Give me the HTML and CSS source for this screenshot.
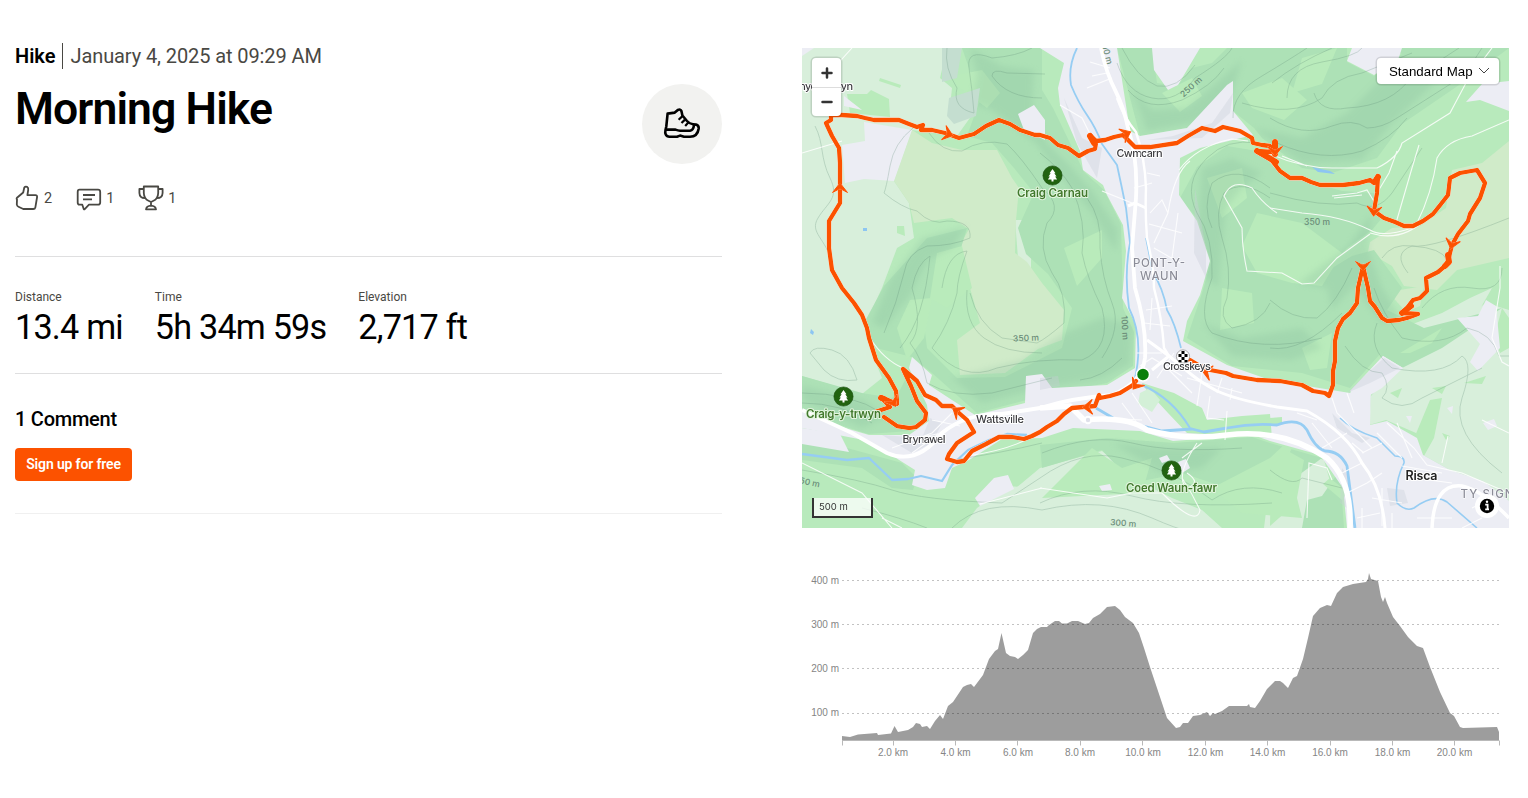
FILE: index.html
```html
<!DOCTYPE html>
<html lang="en">
<head>
    <meta charset="UTF-8">
    <meta name="viewport" content="width=device-width, initial-scale=1.0">
    <title>Morning Hike</title>
    <link rel="stylesheet" href="styles.css">
</head>
<body>
    <main class="activity">
        <section class="details">
            <div class="summary">
                <div class="heading">
                    <div class="meta">
                        <span class="sport">Hike</span>
                        <time class="date">January 4, 2025 at 09:29 AM</time>
                    </div>
                    <h1 class="title">Morning Hike</h1>
                </div>
                <div class="sport-icon">
                    <svg width="40" height="40" viewBox="0 0 40 40" fill="none" stroke="#000" stroke-width="2.6" stroke-linejoin="round">
                        <path d="M5.6 9.6 L12.8 8.6 L15.8 6 Q18.5 4.8 19.4 7 L20.400 11.500 L25 17 Q27.500 19.800 31 20.200 L34 20.600 Q37 21.500 36.700 24.500 C36 29.500 33 32.700 28 32.700 H22 L18 31.600 L15 32.700 H7.500 C3.500 32.700 2.800 29 3.500 26 L4.300 22.500 Z"/>
                        <path d="M4 25.600 H13.500 Q16 26.600 18 26.700 H28 Q31.500 26.200 32 21"/>
                        <path stroke-width="2.200" d="M16.600 15.700 L20.200 12.400 M19.500 19 L23 15.600 M23.200 21.900 L26.300 18.600"/>
                    </svg>
                </div>
            </div>

            <div class="reactions">
                <div class="reaction">
                    <svg width="24" height="26" viewBox="0 0 24 26">
                        <path d="M2 14.5 Q1.2 14 2 12.8 L8.2 7.5 L9.3 2.5 Q10.2 1.2 12 1.8 Q13.7 2.8 13.2 5 L12.4 10.2 H20.4 Q22.3 10.3 22.1 12 L20.4 22.2 Q20 24 18.2 24 H8.2 L3.5 21.7 Q2 21 1.8 19.5 Z"/>
                    </svg>
                    <span>2</span>
                </div>
                <div class="reaction">
                    <svg width="26" height="26" viewBox="0 0 26 26">
                        <path d="M3.5 4.7 H22 Q24.2 4.7 24.2 7 V17.5 Q24.2 19.7 22 19.7 H13 L8.5 24.3 H7.8 L6.3 19.7 H3.5 Q1.7 19.7 1.7 17.5 V7 Q1.7 4.7 3.5 4.7 Z M7 10 H19 M7 14.3 H16"/>
                    </svg>
                    <span>1</span>
                </div>
                <div class="reaction">
                    <svg width="26" height="26" viewBox="0 0 26 26">
                        <path d="M5.8 1.5 H20.2 V8 Q20 13.7 15.5 15.8 L13 17 L10.5 15.8 Q6 13.7 5.8 8 Z M5.8 4 H1.4 V8 Q1.6 13.1 7 13.2 M20.2 4 H24.6 V8 Q24.4 13.1 19 13.2 M13 17 V20.5 M8 24.3 Q8.6 21 13 20.7 Q17.4 21 18 24.3 Z"/>
                    </svg>
                    <span>1</span>
                </div>
            </div>

            <div class="stats">
                <div class="stat">
                    <div class="stat-label">Distance</div>
                    <div class="stat-value">13.4 mi</div>
                </div>
                <div class="stat">
                    <div class="stat-label">Time</div>
                    <div class="stat-value">5h 34m 59s</div>
                </div>
                <div class="stat">
                    <div class="stat-label">Elevation</div>
                    <div class="stat-value">2,717 ft</div>
                </div>
            </div>

            <div class="comments">
                <h2 class="comments-title">1 Comment</h2>
                <button class="signup-btn">Sign up for free</button>
            </div>
        </section>

        <section class="visuals">
            <div class="map">
                <svg class="map-canvas" width="707" height="480" viewBox="0 0 707 480">
                    <defs>
                        <filter id="soft" x="-10%" y="-10%" width="120%" height="120%"><feGaussianBlur stdDeviation="3"/></filter>
                        <g id="park">
                            <circle r="9.6" fill="#216310" stroke="#174b0b" stroke-width=".6"/>
                            <path d="M0 -6.5 L3 -2.2 H1.8 L4 1 H2.6 L4.6 4 H1 V6 H-1 V4 H-4.6 L-2.6 1 H-4 L-1.8 -2.2 H-3 Z" fill="#fff"/>
                        </g>
                        <path id="arrow" d="M0 -5 L7.5 4.5 L0 .5 L-7.5 4.5 Z"/>
                    </defs>

                    <rect width="707" height="480" fill="#b8eabc"/>

                    <!-- open fields -->
                    <g fill="#d8efdb">
                        <path d="M0 0 H145 L138 30 150 40 147 68 175 60 155 88 110 82 92 133 107 155 112 190 95 200 80 240 64 275 68 300 80 330 60 346 0 328 Z"/>
                        <path d="M213 172 H229 V240 L216 210 Z"/>
                        <path d="M601 310 L640 290 662 270 684 255 707 262 707 456 681 433 648 422 621 407 614 385 584 372 567 377 569 348 Z"/>
                        <path d="M600 280 L640 265 668 250 690 240 670 275 630 300 606 305 Z"/>
                        <path d="M238 420 L300 403 336 433 370 450 400 462 420 480 H235 L190 460 Z"/>
                        <path d="M466 412 L500 405 522 412 530 440 512 456 502 480 462 480 468 432 Z"/>
                        <path d="M175 460 L205 438 238 440 260 470 250 480 160 480 Z"/>
                    </g>
                    <g fill="#d0ebc9">
                        <path d="M110 82 L130 95 160 102 195 102 210 130 217 140 214 172 213 205 225 214 240 235 262 262 260 292 236 301 203 325 158 327 155 292 178 275 168 240 155 202 167 181 150 170 112 175 107 155 92 133 Z"/>
                        <path d="M707 93 L680 115 650 122 644 160 618 178 590 180 568 194 566 204 590 218 602 238 635 242 655 222 707 210 Z"/>
                        <path d="M586 244 L622 238 618 258 604 264 Z"/>
                    </g>

                    <!-- woodland -->
                    <g fill="#ade1b6">
                        <path d="M160 0 H240 V42 L251 60 268 95 282 124 302 142 319 176 321 260 332 284 331 318 305 335 240 348 175 365 130 325 110 309 74 300 62 275 82 238 125 190 165 180 150 230 120 260 125 300 155 330 203 329 260 300 270 260 246 226 224 206 216 180 232 145 212 120 190 95 165 88 178 52 Z"/>
                        <path d="M0 328 L60 345 90 350 98 342 104 330 115 350 124 371 108 383 66 386 35 376 0 363 Z"/>
                        <path d="M315 0 H350 L355 35 375 38 390 20 410 15 425 0 H545 L545 14 572 28 600 6 590 0 707 0 660 35 600 76 575 110 530 125 500 120 460 90 452 80 431 63 431 33 385 80 338 88 Z"/>
                        <path d="M378 150 L395 119 425 98 455 103 478 125 540 143 572 145 580 170 570 182 545 200 520 228 500 238 550 208 572 202 600 240 585 262 622 280 700 260 640 300 590 325 578 306 548 340 500 325 430 318 385 290 400 245 409 214 396 172 Z"/>
                        <path d="M372 395 L450 389 468 395 520 410 490 432 462 430 440 445 380 425 330 435 300 402 240 420 238 397 305 390 Z"/>
                        <path d="M0 388 L45 400 100 415 115 430 111 442 90 440 60 420 0 412 Z"/>
                        <path d="M500 480 L505 452 520 448 538 422 542 480 Z"/>
                    </g>
                    <g fill="#b9ebbb">
                        <path d="M45 46 L65 46 69 42 87 51 88 69 48 65 Z M78 30 L99 37 98 40 77 33 Z M95 178 L102 178 103 188 95 185 Z"/>
                        <path d="M150 28 L180 22 198 45 185 60 155 38 Z M135 205 L160 198 170 240 145 260 128 250 Z M108 252 L130 250 122 290 105 312 95 280 Z"/>
                        <path d="M440 45 L480 30 505 52 482 72 450 60 Z M500 10 L535 0 520 36 490 45 Z"/>
                        <path d="M455 165 L500 175 540 205 520 238 490 235 455 225 440 198 Z M405 130 L440 120 445 150 420 170 Z"/>
                        <path d="M360 45 L390 30 400 48 378 64 Z M260 12 L280 10 284 38 264 40 Z M296 70 L308 75 312 82 300 88 291 80 Z"/>
                        <path d="M262 200 L300 182 300 210 275 238 Z M420 240 L450 245 452 275 418 282 Z M500 300 L530 285 525 320 508 322 Z"/>
                        <path d="M240 450 L290 400 320 420 350 410 340 445 Z M410 440 L468 410 500 380 485 410 500 470 440 465 Z"/>
                        <path d="M469 420 L484 402 502 412 494 455 468 478 Z"/>
                        <path d="M628 352 L640 350 632 390 618 415 613 388 Z M598 305 L640 280 630 295 608 305 Z M700 260 L707 270 707 300 698 305 692 290 Z"/>
                        <path d="M365 118 L376 120 366 150 355 152 Z M376 205 L389 194 395 200 395 222 385 215 374 210 Z M350 112 L360 112 361 118 351 117 Z"/>
                        <path d="M640 385 L648 388 644 392 Z M588 345 L600 340 596 350 Z M662 335 L684 328 680 336 Z M630 340 L644 338 640 346 Z"/>
                    </g>

                    <!-- hill shading -->
                    <g class="shade" filter="url(#soft)">
                        <path d="M168 0 L200 18 232 22 230 60 245 95 268 118 292 145 316 182 314 204 290 165 258 128 235 96 190 62 170 55 175 25 Z"/>
                        <path d="M120 190 L165 178 150 200 126 212 108 248 82 280 70 275 88 232 Z"/>
                        <path d="M150 330 L220 312 262 285 300 270 330 276 328 316 300 330 240 340 180 355 Z"/>
                        <path d="M330 40 L350 62 385 60 420 30 440 12 425 60 390 75 345 83 Z"/>
                        <path d="M452 80 L500 90 545 65 580 30 640 28 590 75 560 112 500 115 Z"/>
                        <path d="M400 120 L430 110 460 125 440 140 424 160 416 240 392 220 Z"/>
                        <path d="M496 235 L545 200 570 165 566 200 580 240 598 268 580 275 552 238 530 262 525 240 Z"/>
                        <path d="M0 338 L60 352 85 368 60 380 0 352 Z"/>
                        <path d="M400 275 L440 290 500 280 520 300 490 312 430 308 Z"/>
                        <path d="M310 395 L360 400 420 400 400 420 360 425 Z"/>
                    </g>

                    <!-- built-up areas -->
                    <path class="town" d="M238 0 H315 L328 83 338 88 385 80 425 37 431 33 431 63 451 87 398 100 378 110 377 147 395 173 408 213 398 247 385 273 381 293 425 317 468 332 548 345 581 308 601 320 569 342 568 377 585 373 615 390 621 407 648 422 681 433 707 453 V480 H545 L541 440 518 407 468 393 451 387 371 393 338 383 271 380 240 390 200 391 167 412 150 420 143 440 125 442 110 437 113 422 67 393 0 380 V363 L33 377 67 387 107 387 127 373 125 357 107 320 110 309 130 327 127 337 173 367 223 355 224 328 240 326 250 340 305 337 333 320 334 277 320 250 321 240 324 203 321 177 305 147 301 137 281 122 278 103 258 57 256 40 262 15 Z"/>
                    <path class="town" d="M62 74 L110 82 92 133 62 131 43 135 40 97 63 93 Z M0 0 H12 L0 8 Z M42 48 L60 62 42 58 Z M216 66 L232 57 243 72 243 92 222 82 Z"/>
                    <path d="M140 0 H160 L155 30 140 34 Z M147 50 L178 40 174 68 152 76 145 68 Z" fill="#c4ded0"/>
                    <path class="town" d="M350 0 L398 0 376 37 366 42 352 22 Z M545 13 L550 0 600 0 596 12 572 27 Z M664 54 L680 36 707 33 V63 L678 52 Z"/>
                    <path class="town" d="M655 270 L676 268 684 252 694 258 698 300 676 323 668 314 678 296 Z M173 450 L192 430 206 427 212 441 178 458 Z M0 380 L38 386 47 404 0 396 Z M681 375 L692 371 695 378 686 382 Z M372 245 L398 243 386 270 375 262 Z M604 368 L610 368 608 375 Z M645 360 L651 358 650 366 Z M357 410 L365 407 368 412 360 415 Z M376 414 L384 411 388 420 380 425 Z M297 438 L308 436 310 442 300 443 Z"/>
                    <path class="town" d="M548 343 L581 308 601 320 580 340 560 352 Z"/>
                    <path d="M340 335 L372 345 400 360 405 372 440 368 468 366 470 390 385 385 366 365 343 340 Z M521 436 L528 430 545 444 540 452 Z M468 370 L480 369 480 376 468 377 Z" fill="#b9ebbb"/>
                    <path d="M338 345 L348 340 358 352 350 364 336 356 Z" fill="#d3f0d7"/>
                    <g fill="#c9cdd8" opacity=".35">
                        <path d="M262 50 L280 90 300 100 295 130 275 95 Z M371 88 L410 75 431 45 428 65 400 90 345 92 Z M393 140 L404 200 404 230 392 205 Z M238 330 L256 328 258 338 238 342 Z"/>
                        <path d="M530 365 L550 385 568 390 560 395 535 380 Z M560 330 L582 310 598 320 568 335 545 345 Z M80 387 L120 390 128 370 140 375 130 395 110 405 Z M585 440 L602 442 606 455 588 458 Z M540 420 L548 430 545 460 538 455 Z"/>
                    </g>

                    <!-- contour lines -->
                    <g class="contour">
                        <path d="M13 78 C22 95 18 110 28 130 S25 155 16 170 S24 190 30 215"/>
                        <path d="M111 80 Q92 95 88 118 T82 145 Q100 160 115 163 Q130 178 145 173 Q170 173 168 190 Q150 198 125 198 Q105 205 102 225 Q95 255 82 285"/>
                        <path d="M127 85 Q140 105 160 103 Q180 90 205 96 Q220 110 240 140 Q262 158 245 175 Q235 200 250 225 Q265 245 262 275 Q245 290 235 295 L200 290 Q175 275 168 245"/>
                        <path d="M145 0 Q142 20 155 40 Q150 60 172 65 Q170 40 167 20 T190 10 Q215 8 230 0 M240 50 Q205 50 190 28 Q190 20 205 25 L243 26"/>
                        <path d="M110 240 Q115 215 128 208 Q125 240 118 262 T98 300 M140 240 Q145 205 165 203 Q155 230 155 245 Q148 275 130 300 Q160 335 195 320 Q235 310 280 312 Q310 300 300 260 Q285 230 280 205 Q285 175 270 140 Q258 120 238 105"/>
                        <path d="M300 310 Q320 280 310 255 T298 200 Q300 170 285 150 M165 242 Q162 275 182 290 T240 305 M278 332 Q300 330 320 310"/>
                        <path d="M110 240 Q122 280 108 295 Q120 310 125 335 Q150 350 190 345 L250 330 M8 305 Q12 297 30 302 T55 332 Q35 335 22 322 Z"/>
                        <path d="M315 15 Q325 45 350 50 T393 30 Q425 10 430 0 M320 0 Q335 30 355 38 Q375 42 393 17 M326 42 Q345 65 380 52 Q410 38 422 20"/>
                        <path d="M431 70 Q430 45 460 28 Q490 10 505 0 M470 35 Q495 15 530 0 M468 70 Q500 90 530 78 Q550 70 565 80 Q580 80 595 70 L650 35 Q665 25 680 0"/>
                        <path d="M440 55 Q490 70 520 50 Q530 30 560 25 L610 5 M485 50 Q485 20 520 14 T560 0 M512 45 Q518 65 545 60 Q590 58 610 28 Q630 18 657 0"/>
                        <path d="M475 95 Q520 115 560 103 Q590 90 605 70 M455 95 Q425 90 405 110 Q380 135 395 165 Q412 190 410 230 Q395 270 410 285 Q460 305 520 290"/>
                        <path d="M468 150 Q440 130 422 145 Q412 165 420 190 Q430 220 425 250 Q415 270 430 280 Q460 275 468 255 M468 140 Q435 115 410 135 Q400 160 410 180 M468 145 Q520 160 555 155 Q575 165 590 145 L620 100"/>
                        <path d="M468 252 Q490 272 515 270 Q535 255 550 220 M468 300 Q500 305 540 265 M572 240 Q580 265 600 290 Q640 300 665 280 Q690 285 697 308 L707 308 M575 275 Q565 300 590 320 Q640 330 660 308 Q672 315 660 350 T700 425"/>
                        <path d="M543 298 Q560 325 580 325 Q590 340 580 350 Q600 365 620 350 L680 320 M606 225 Q590 205 610 198 Q640 200 645 212 M580 210 Q590 195 610 198 T707 170 M620 260 Q640 235 670 240 T700 220"/>
                        <path d="M0 355 Q40 355 70 375 M0 345 Q50 345 80 365 M0 422 Q60 432 90 442 T200 455 L238 430 Q280 400 320 410 Q370 420 410 452 Q440 432 480 445 M150 480 Q180 450 240 462 Q300 448 350 470 T400 480"/>
                        <path d="M240 405 Q290 385 330 395 T440 400 M238 455 Q280 435 330 448 T470 455 M150 412 Q200 405 240 395 M60 460 Q100 470 125 480 M468 422 Q490 440 500 430 L540 440"/>
                    </g>

                    <!-- water -->
                    <g class="river">
                        <path d="M275 0 Q266 18 269 37 Q276 54 285 67 T300 96 L315 117 Q320 140 324 160 L328 195 Q322 225 327 260 Q342 290 333 330" stroke-width="1.800"/>
                        <path d="M344 190 L351 225 Q361 240 365 262 Q373 275 379 300" stroke-width="1.700"/>
                        <path d="M0 406 L45 412 67 410 90 432 106 431 119 428 140 433 150 417 166 402 187 392 205 386 225 387" stroke-width="2.300"/>
                        <path d="M294 360 L311 370 360 383 390 381 402 384 425 380 Q450 375 475 377 Q497 369 505 382 Q513 400 523 403 Q538 403 545 418 L553 480" stroke-width="2.800"/>
                        <path d="M340 337 Q370 350 388 380" stroke-width="2"/>
                        <path d="M538 370 Q550 382 575 390 L593 408 Q603 408 602 415 Q592 435 595 455 Q604 464 612 460 Q632 445 645 454 L675 480" stroke-width="1.600"/>
                    </g>
                    <path d="M510 119 L528 123 533 126 516 124 Z M61 180 h4 v3 h-4 Z M9 281 l3 3 -1 3 -3 -2 Z" fill="#8dc6f2"/>

                    <!-- minor streets and tracks -->
                    <g class="street">
                        <path d="M30 22 L50 0 M0 105 L40 93 M258 57 L280 70 295 100 M285 40 L310 30 M288 14 L308 20 M290 28 L305 25"/>
                        <path d="M377 122 Q395 98 430 91 L446 93 M366 165 Q372 125 388 113 M348 165 L360 152 366 165 352 195 M347 176 L380 185 M352 200 L378 215 M376 165 L370 210 M332 140 L350 135 M345 125 L358 128 M330 155 L300 143"/>
                        <path d="M344 262 L370 258 M342 275 L368 278 M350 250 L348 282 M335 305 L360 305 M338 318 L350 310 380 328 M360 315 L390 345 M372 305 L355 330 M385 330 L440 345 M400 325 L395 358 M420 330 L415 345 M430 340 L428 352 M330 345 L350 375 M320 355 L335 375 M300 370 L340 372"/>
                        <path d="M90 400 L130 385 150 365 M110 405 L145 380 M100 393 L140 385 M130 372 L158 378 M0 415 L60 445 90 480 M68 290 Q82 312 101 320 M165 408 Q210 402 237 385 M178 456 L240 440 M80 470 L100 480"/>
                        <path d="M468 106 Q500 120 530 120 L575 120 Q596 110 600 95 L648 65 665 33 690 0 M480 108 L505 118 M468 160 L500 165 Q540 168 568 182 Q580 190 610 180 M595 103 L587 125 575 145 M617 97 L610 120 594 175"/>
                        <path d="M530 148 L555 145 565 142 573 155 M532 150 L560 147 M568 186 L535 210 512 235 500 236 480 225 445 223 Q440 200 440 180 L422 148 Q430 130 450 140 Q460 155 475 165"/>
                        <path d="M615 175 Q630 145 635 110 Q645 92 670 88 L707 72 M698 240 L690 290 700 314 707 318 M698 218 V240 M568 185 Q600 195 625 170"/>
                        <path d="M408 348 L405 370 422 372 M425 363 L423 392 M400 395 L380 410 M385 425 Q400 435 385 440 Q372 430 395 395 M238 440 L305 450 330 445 360 445 Q395 480 398 462 Q390 445 380 430 M505 470 L507 415 525 420 530 432"/>
                        <path d="M530 350 L535 365 570 400 M545 345 L552 365 M585 375 L612 400 625 417 660 425 707 445 M595 375 L610 410 M575 385 L600 410 M640 415 L646 388 M600 418 L640 425 M612 430 L650 435 M680 372 L707 385"/>
                        <path d="M540 425 L560 415 M545 445 L565 435 580 425 M555 470 L578 465 M580 440 V478 M590 465 V480 M560 460 V480 M570 450 L600 455 M520 400 L545 385 M510 375 L530 400 M495 365 L515 372 M615 470 H650 M670 460 L690 450 M560 405 L580 395 M550 395 L562 405 M660 480 L680 470"/>
                    </g>

                    <!-- main roads -->
                    <g class="road">
                        <path d="M299 0 Q304 25 314 44 Q322 60 326 80 Q336 110 334 150 L330 200 333 240 Q345 280 343 310 Q340 335 310 347 Q270 350 238 360 L200 366 Q165 365 140 385 Q115 418 85 405 L50 385 0 362" stroke-width="3.800"/>
                        <path d="M315 50 Q322 70 334 84 Q343 110 344 140 Q343 165 345 190 Q352 220 352 240 Q360 270 362 300 L367 308" stroke-width="2.400"/>
                        <path d="M326 158 L333 155 344 160 M345 292 L367 308 M350 322 L367 308 390 327 Q400 335 415 343 Q435 352 475 359 L505 363 Q545 385 560 415 Q580 440 583 480" stroke-width="3"/>
                        <path d="M238 360 L268 358 282 372 Q325 368 345 382 Q385 393 425 387 Q480 380 525 410 Q550 432 548 480" stroke-width="5.500"/>
                        <path d="M630 480 Q632 435 660 438 Q680 442 707 470" stroke-width="3.500"/>
                    </g>
                    <circle cx="286" cy="372" r="3.2" fill="#dfe0ea" stroke="#fff" stroke-width="2"/>

                    <!-- elevation labels -->
                    <g class="contour-label">
                        <text transform="translate(391 41) rotate(-42)" text-anchor="middle">250 m</text>
                        <text x="515" y="177" text-anchor="middle">350 m</text>
                        <text transform="translate(224 293) rotate(-2)" text-anchor="middle">350 m</text>
                        <text transform="translate(320 280) rotate(86)" text-anchor="middle">100 m</text>
                        <text transform="translate(321 478) rotate(4)" text-anchor="middle">300 m</text>
                        <text transform="translate(-8 434) rotate(12)">250 m</text>
                        <text transform="translate(302 5) rotate(75)" text-anchor="middle">100 m</text>
                    </g>

                    <!-- route -->
                    <g class="route">
                        <path d="M334 333 L331 337 318 345 308 348 298 350 297 347 293 358 281 359 270 360 262 366 255 373 245 379 238 384 230 388 222 391 210 389 197 389 184 396 170 403 162 413 155 414 145 411 147 406 155 395 172 384 165 372 157 365 150 358 140 358 134 352 123 347 115 333 101 321 109 338 115 353 124 365 123 372 114 379 108 380 95 378 82 369 M73 364 L88 359 79 349 95 356 95 353 94 343 87 330 74 312 67 290 65 280 60 267 52 255 40 240 30 222 27 200 27 173 38 155 38 115 37 100 30 88 24 75 29 72 29 67 40 67 55 68 63 70 72 72 97 72 107 76 115 79 121 77 119 82 130 82 143 85 157 90 172 86 184 78 197 72 208 76 218 82 233 87 238 87 248 90 256 97 266 100 277 108 286 103 293 101 294 95 288 87 294 93 303 92 312 89 321 87 326 92 333 99 348 99 361 97 375 95 386 88 400 80 413 83 421 79 438 83 450 90 451 95 460 97 468 98 470 104 455 103 468 110 478 123 488 130 500 130 509 134 518 137 541 137 557 135 568 132 572 135 576 128 575 145 572 163 582 170 593 174 602 178 611 178 621 173 631 166 639 156 646 147 648 130 658 125 675 122 683 135 678 150 668 166 666 173 656 186 650 197 646 213 643 218 636 224 624 230 625 243 618 250 611 252 605 260 600 265 616 266 605 270 597 272 585 273 580 270 573 259 568 253 566 240 561 218 556 240 555 255 548 265 541 271 536 280 533 293 533 313 531 323 531 337 527 348 523 345 511 343 500 337 478 333 455 332 431 328 424 325 408 322 398 318 388 312"/>
                        <path class="blobs" d="M455 103 L474 114 M473 94 V106 M288 88 L292 95 M646 207 L647 214 643 218 M574 132 L576 129 M79 350 L82 351 M600 265 L609 258"/>
                    </g>
                    <g class="arrows">
                        <use href="#arrow" transform="translate(38 140)"/>
                        <use href="#arrow" transform="translate(146 86) rotate(108)"/>
                        <use href="#arrow" transform="translate(324 86) rotate(65)"/>
                        <use href="#arrow" transform="translate(473 103) rotate(180)"/>
                        <use href="#arrow" transform="translate(572 163) rotate(185)"/>
                        <use href="#arrow" transform="translate(650 196) rotate(195)"/>
                        <use href="#arrow" transform="translate(561 218) rotate(180)"/>
                        <use href="#arrow" transform="translate(405 324) rotate(-75)"/>
                        <use href="#arrow" transform="translate(334 337) rotate(215)"/>
                        <use href="#arrow" transform="translate(286 359) rotate(-92)"/>
                        <use href="#arrow" transform="translate(155 363) rotate(-55)"/>
                        <use href="#arrow" transform="translate(91 354) rotate(150)"/>
                    </g>

                    <!-- start and finish -->
                    <circle cx="341" cy="326.5" r="6.5" fill="#0b7f0b" stroke="#fff" stroke-width="1.500"/>
                    <circle cx="381" cy="308.5" r="6.600" fill="#fff" stroke="#777" stroke-width=".6"/>
                    <path d="M379.5 303 h3 v3 h-3 Z M379.5 309 h3 v3 h-3 Z M376.5 306 h3 v3 h-3 Z M382.5 306 h3 v3 h-3 Z M376.5 312 h3 v2.2 h-3 Z M382.5 312 h3 v2.2 h-3 Z" fill="#000"/>

                    <!-- place names -->
                    <use href="#park" x="250.5" y="127.500"/>
                    <use href="#park" x="41.500" y="348.500"/>
                    <use href="#park" x="369.500" y="422.500"/>
                    <g class="park-label">
                        <text x="250.500" y="149" textLength="71">Craig Carnau</text>
                        <text x="41.500" y="370" textLength="75">Craig-y-trwyn</text>
                        <text x="369.500" y="444" textLength="91">Coed Waun-fawr</text>
                    </g>
                    <g class="village-label">
                        <text x="337.500" y="109" textLength="46">Cwmcarn</text>
                        <text x="385" y="322" textLength="48">Crosskeys</text>
                        <text x="198" y="375" textLength="48">Wattsville</text>
                        <text x="122" y="395" textLength="43">Brynawel</text>
                        <text x="16.500" y="42" textLength="69">Mynyddislwyn</text>
                    </g>
                    <text class="town-label" x="619.500" y="431.500" textLength="32">Risca</text>
                    <g class="district-label">
                        <text x="357" y="219" textLength="52">PONT-Y-</text>
                        <text x="357" y="232" textLength="38">WAUN</text>
                        <text x="685" y="450" textLength="53">TY SIGN</text>
                    </g>
                </svg>

                <div class="zoom-control">
                    <button class="zoom-btn" aria-label="Zoom in"><svg width="12" height="12"><path d="M1.500 6 H10.500 M6 1.500 V10.500"/></svg></button>
                    <button class="zoom-btn" aria-label="Zoom out"><svg width="12" height="12"><path d="M1.500 6 H10.500"/></svg></button>
                </div>
                <button class="map-style">
                    Standard Map
                    <svg width="12" height="8" viewBox="0 0 12 8"><path d="M1 1 L6 6 L11 1"/></svg>
                </button>
                <div class="scale">500 m</div>
                <button class="info-btn" aria-label="Attribution">
                    <svg width="24" height="24" viewBox="0 0 24 24">
                        <circle cx="12" cy="12" r="7.200"/>
                        <path d="M10.200 10.600 H12.600 V15.200 M10.200 15.400 H14" fill="none" stroke="#fff" stroke-width="1.800"/>
                        <circle cx="12" cy="7.800" r="1.200" fill="#fff"/>
                    </svg>
                </button>
            </div>

            <svg class="elevation-chart" width="707" height="210" viewBox="0 0 707 210">
                <path class="profile" d="M40 180 L40 176 48 177 56 174.500 75 173 76 175 89 173.500 92.500 166 96 172 106 170 111 167 114 163 118 164 120 167 125 166 128 169 133 161 138 155 141 159 146 146 151 142 161 127 165 125 169 124 172 127 181 115 187 99 193 91 196 89 199.500 73 204 93 208 96 213 97 216 99 221 95 226 90 231 73 235 69 239 67 245 67 247 65 253 61 257 61 260 63.500 265 63.500 270 61 276 61 283 64 287 63 291 58 298 54 305 47 313 46 318 50 323 57 331 63 337 73 342 88 348 107 355 128 358 137 365 158 374 168 378 167 381 163 386 163 391 156 398 155 405 152 408 156 411 153 413 154 420 151 427 146 445 146 447 144 448 147 453 148 458 141 465 129 473 121 478 121 481 123 486 128 491 118 495 116 501 99 506 78 511 56 518 48 525 45 529 46 535 33 541 27 551 24 564 22 566 19 567 13 569 19 576 21 579 37 581 42 583 37 585 43 591 57 598 66 606 77 615 86 621 88 628 107 638 132 648 153 652 156 658 167 661 168 695 167 697 172 697 180 Z"/>
                <path class="gridline" d="M40 20.500 H697 M40 64.500 H697 M40 108.500 H697 M40 153.500 H697"/>
                <path class="axis" d="M40 180.500 H697.500 M40.500 181 V185.500 M91.500 181 V185.500 M153.500 181 V185.500 M215.500 181 V185.500 M278.500 181 V185.500 M340.500 181 V185.500 M403.500 181 V185.500 M465.500 181 V185.500 M528.500 181 V185.500 M590.500 181 V185.500 M652.500 181 V185.500 M697.500 181 V185.500"/>
                <g class="y-labels">
                    <text x="37" y="24">400 m</text>
                    <text x="37" y="68">300 m</text>
                    <text x="37" y="112">200 m</text>
                    <text x="37" y="156">100 m</text>
                </g>
                <g class="x-labels">
                    <text x="91" y="196">2.0 km</text>
                    <text x="153.500" y="196">4.0 km</text>
                    <text x="216" y="196">6.0 km</text>
                    <text x="278" y="196">8.0 km</text>
                    <text x="341" y="196">10.0 km</text>
                    <text x="403.500" y="196">12.0 km</text>
                    <text x="465.500" y="196">14.0 km</text>
                    <text x="528" y="196">16.0 km</text>
                    <text x="590.500" y="196">18.0 km</text>
                    <text x="652.500" y="196">20.0 km</text>
                </g>
            </svg>
        </section>
    </main>
</body>
</html>
```
FILE: styles.css
```css
* {
    margin: 0;
    padding: 0;
    box-sizing: border-box;
}

body {
    font-family: Roboto, "Liberation Sans", sans-serif;
    background: #fff;
    color: #000;
}

button {
    border: none;
    font-family: inherit;
    cursor: pointer;
}

.activity {
    display: grid;
    grid-template-columns: 707px 707px;
    gap: 80px;
    padding: 0 15px;
}

.details {
    padding-top: 43px;
}

.summary {
    display: flex;
    justify-content: space-between;
    align-items: flex-start;
    height: 121px;
}

.meta {
    display: flex;
    align-items: center;
    height: 26px;
    font-size: 20px;
    white-space: nowrap;
}

.sport {
    height: 26px;
    line-height: 26px;
    padding-right: 7px;
    border-right: 1px solid #494843;
    font-weight: 600;
}

.date {
    padding-left: 7px;
    line-height: 26px;
    color: #494843;
    letter-spacing: -0.1px;
}

.title {
    margin-top: 13px;
    font-size: 44.5px;
    font-weight: 600;
    line-height: 54px;
    letter-spacing: -0.9px;
    white-space: nowrap;
}

.sport-icon {
    display: flex;
    align-items: center;
    justify-content: center;
    width: 80px;
    height: 80px;
    margin-top: 41px;
    border-radius: 50%;
    background: #f2f2f0;
}

.reactions {
    display: flex;
    gap: 24px;
    height: 92px;
    padding-top: 21px;
}

.reaction {
    display: flex;
    align-items: center;
    gap: 4px;
    height: 26px;
    font-size: 14.5px;
    color: #494843;
}

.reaction:first-child {
    gap: 5px;
}

.reaction svg {
    fill: none;
    stroke: #494843;
    stroke-width: 1.8;
    stroke-linejoin: round;
}

.stats {
    display: flex;
    gap: 32px;
    height: 118px;
    padding-top: 33px;
    border-top: 1px solid #dfdfe0;
    border-bottom: 1px solid #dfdfe0;
}

.stat-label {
    font-size: 12px;
    line-height: 14px;
    color: #494843;
}

.stat-value {
    margin-top: 3px;
    font-size: 34.2px;
    line-height: 40px;
    white-space: nowrap;
    letter-spacing: -0.8px;
}

.comments {
    height: 140px;
    padding-top: 32px;
    border-bottom: 1px solid #f0f0f0;
}

.comments-title {
    font-size: 20px;
    font-weight: 500;
    line-height: 26px;
    letter-spacing: -0.25px;
}

.signup-btn {
    display: block;
    width: 117px;
    height: 33px;
    margin-top: 16px;
    padding-bottom: 1px;
    border-radius: 4px;
    background: #fc5200;
    color: #fff;
    font-size: 14px;
    font-weight: 600;
    letter-spacing: -0.15px;
    white-space: nowrap;
}

.visuals {
    padding-top: 48px;
}

.map {
    position: relative;
    width: 707px;
    height: 480px;
    overflow: hidden;
}

.map-canvas {
    display: block;
}

.shade {
    fill: #7fb597;
    opacity: 0.22;
}

.town {
    fill: #ecedf4;
}

.contour {
    fill: none;
    stroke: #5e8a76;
    stroke-width: 0.7;
    opacity: 0.38;
}

.river {
    fill: none;
    stroke: #96cdf3;
    stroke-linejoin: round;
}

.street {
    fill: none;
    stroke: #fff;
    stroke-width: 1.1;
    opacity: 0.85;
}

.road {
    fill: none;
    stroke: #fff;
    stroke-linejoin: round;
}

.contour-label {
    font: 500 8.5px Inter, sans-serif;
    fill: #6a8c78;
}

.route {
    filter: drop-shadow(0 0 0.6px #fff) drop-shadow(0 0 0.6px #fff);
}

.route path {
    fill: none;
    stroke: #fc5200;
    stroke-width: 4.3;
    stroke-linejoin: round;
    stroke-linecap: round;
}

.route .blobs {
    stroke-width: 6;
}

.arrows {
    fill: #fc5200;
    stroke: #fc5200;
    stroke-width: 1;
    filter: drop-shadow(0 0 0.5px #fff);
}

.map-canvas text {
    paint-order: stroke;
    stroke-linejoin: round;
}

.park-label,
.village-label,
.town-label,
.district-label {
    font-family: Inter, sans-serif;
    text-anchor: middle;
    stroke: #fff;
    stroke-width: 2px;
}

.park-label {
    font-size: 11.5px;
    font-weight: 600;
    fill: #42792d;
    stroke: #e3f5df;
}

.village-label {
    font-size: 11px;
    font-weight: 500;
    fill: #3d3d41;
}

.town-label {
    font-size: 12.5px;
    font-weight: 600;
    fill: #222;
}

.district-label {
    font-size: 11.5px;
    font-weight: 500;
    fill: #8b8c98;
    stroke-width: 1px;
}

.zoom-control {
    position: absolute;
    top: 10px;
    left: 10px;
    width: 29px;
    border-radius: 4px;
    background: #fff;
    box-shadow: 0 0 0 1.5px rgba(0, 0, 0, 0.12);
}

.zoom-btn {
    display: flex;
    align-items: center;
    justify-content: center;
    width: 29px;
    height: 29px;
    background: none;
}

.zoom-btn + .zoom-btn {
    border-top: 1px solid #ddd;
}

.zoom-btn path {
    fill: none;
    stroke: #333;
    stroke-width: 2.5;
    stroke-linecap: round;
}

.map-style {
    position: absolute;
    top: 10px;
    right: 10px;
    display: flex;
    align-items: center;
    justify-content: space-between;
    width: 122px;
    height: 26px;
    padding: 0 9px 0 12px;
    border-radius: 4px;
    background: #fff;
    color: #000;
    font: 13.3px "Liberation Sans", Arial, sans-serif;
    white-space: nowrap;
    box-shadow: 0 0 0 1.5px rgba(0, 0, 0, 0.12);
}

.map-style path {
    fill: none;
    stroke: #444;
}

.scale {
    position: absolute;
    left: 10px;
    bottom: 10px;
    width: 61px;
    height: 20px;
    padding-left: 5px;
    border: 2px solid #333;
    border-top: none;
    background: rgba(255, 255, 255, 0.75);
    color: #333;
    font: 9.5px/17px Inter, sans-serif;
}

.info-btn {
    position: absolute;
    right: 10px;
    bottom: 10px;
    width: 24px;
    height: 24px;
    border-radius: 50%;
    background: #fff;
}

.info-btn svg {
    display: block;
}

.elevation-chart {
    display: block;
    margin-top: 32px;
    font: 10px "Liberation Sans", Arial, sans-serif;
    fill: #858585;
}

.profile {
    fill: #9d9d9d;
}

.gridline {
    fill: none;
    stroke: #000;
    stroke-opacity: 0.24;
    stroke-dasharray: 2 3;
}

.axis {
    fill: none;
    stroke: #b9b9b9;
}

.y-labels {
    text-anchor: end;
}

.x-labels {
    text-anchor: middle;
}
```
